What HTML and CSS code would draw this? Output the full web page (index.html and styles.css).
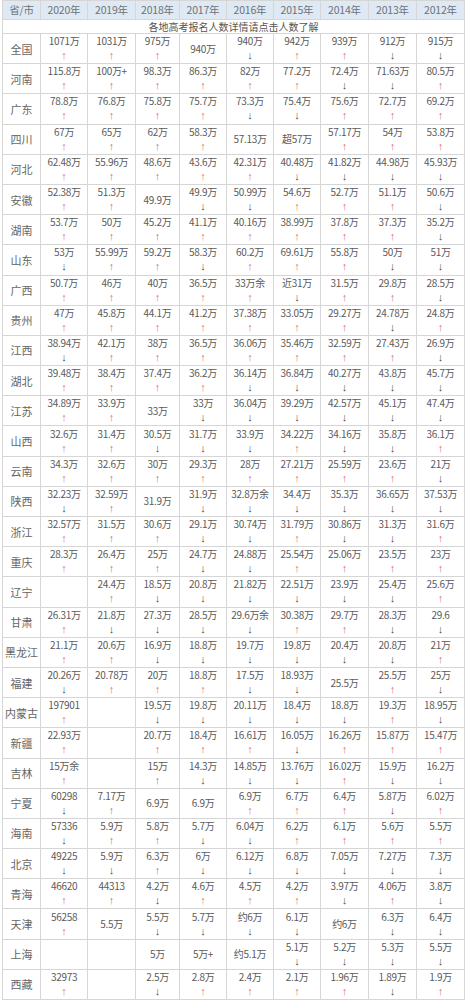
FILE: index.html
```html
<!DOCTYPE html>
<html lang="zh-CN">
<head>
<meta charset="utf-8">
<title>各地高考报名人数</title>
<link rel="stylesheet" href="styles.css">
</head>
<body>
<table class="gk">
<colgroup>
<col class="c0"><col class="c1"><col class="c2"><col class="c3"><col class="c4"><col class="c5"><col class="c6"><col class="c7"><col class="c8"><col class="c9">
</colgroup>
<thead>
<tr class="head"><th>省/市</th><th>2020年</th><th>2019年</th><th>2018年</th><th>2017年</th><th>2016年</th><th>2015年</th><th>2014年</th><th>2013年</th><th>2012年</th></tr>
<tr class="sub"><td colspan="10">各地高考报名人数详情请点击人数了解</td></tr>
</thead>
<tbody>
<tr><th>全国</th><td>1071万<i class="u">↑</i></td><td>1031万<i class="u">↑</i></td><td>975万<i class="u">↑</i></td><td>940万</td><td>940万<i class="d">↓</i></td><td>942万<i class="u">↑</i></td><td>939万<i class="u">↑</i></td><td>912万<i class="d">↓</i></td><td>915万<i class="d">↓</i></td></tr>
<tr><th>河南</th><td>115.8万<i class="u">↑</i></td><td>100万+<i class="u">↑</i></td><td>98.3万<i class="u">↑</i></td><td>86.3万<i class="u">↑</i></td><td>82万<i class="u">↑</i></td><td>77.2万<i class="u">↑</i></td><td>72.4万<i class="d">↓</i></td><td>71.63万<i class="d">↓</i></td><td>80.5万<i class="u">↑</i></td></tr>
<tr><th>广东</th><td>78.8万<i class="u">↑</i></td><td>76.8万<i class="u">↑</i></td><td>75.8万<i class="u">↑</i></td><td>75.7万<i class="u">↑</i></td><td>73.3万<i class="d">↓</i></td><td>75.4万<i class="d">↓</i></td><td>75.6万<i class="u">↑</i></td><td>72.7万<i class="u">↑</i></td><td>69.2万<i class="u">↑</i></td></tr>
<tr><th>四川</th><td>67万<i class="u">↑</i></td><td>65万<i class="u">↑</i></td><td>62万<i class="u">↑</i></td><td>58.3万<i class="u">↑</i></td><td>57.13万</td><td>超57万</td><td>57.17万<i class="u">↑</i></td><td>54万<i class="u">↑</i></td><td>53.8万<i class="u">↑</i></td></tr>
<tr><th>河北</th><td>62.48万<i class="u">↑</i></td><td>55.96万<i class="u">↑</i></td><td>48.6万<i class="u">↑</i></td><td>43.6万<i class="u">↑</i></td><td>42.31万<i class="u">↑</i></td><td>40.48万<i class="d">↓</i></td><td>41.82万<i class="d">↓</i></td><td>44.98万<i class="d">↓</i></td><td>45.93万<i class="d">↓</i></td></tr>
<tr><th>安徽</th><td>52.38万<i class="u">↑</i></td><td>51.3万<i class="u">↑</i></td><td>49.9万</td><td>49.9万<i class="d">↓</i></td><td>50.99万<i class="d">↓</i></td><td>54.6万<i class="u">↑</i></td><td>52.7万<i class="u">↑</i></td><td>51.1万<i class="u">↑</i></td><td>50.6万<i class="d">↓</i></td></tr>
<tr><th>湖南</th><td>53.7万<i class="u">↑</i></td><td>50万<i class="u">↑</i></td><td>45.2万<i class="u">↑</i></td><td>41.1万<i class="u">↑</i></td><td>40.16万<i class="u">↑</i></td><td>38.99万<i class="u">↑</i></td><td>37.8万<i class="u">↑</i></td><td>37.3万<i class="u">↑</i></td><td>35.2万<i class="d">↓</i></td></tr>
<tr><th>山东</th><td>53万<i class="d">↓</i></td><td>55.99万<i class="u">↑</i></td><td>59.2万<i class="u">↑</i></td><td>58.3万<i class="d">↓</i></td><td>60.2万<i class="u">↑</i></td><td>69.61万<i class="u">↑</i></td><td>55.8万<i class="u">↑</i></td><td>50万<i class="d">↓</i></td><td>51万<i class="d">↓</i></td></tr>
<tr><th>广西</th><td>50.7万<i class="u">↑</i></td><td>46万<i class="u">↑</i></td><td>40万<i class="u">↑</i></td><td>36.5万<i class="u">↑</i></td><td>33万余<i class="u">↑</i></td><td>近31万<i class="d">↓</i></td><td>31.5万<i class="u">↑</i></td><td>29.8万<i class="u">↑</i></td><td>28.5万<i class="d">↓</i></td></tr>
<tr><th>贵州</th><td>47万<i class="u">↑</i></td><td>45.8万<i class="u">↑</i></td><td>44.1万<i class="u">↑</i></td><td>41.2万<i class="u">↑</i></td><td>37.38万<i class="u">↑</i></td><td>33.05万<i class="u">↑</i></td><td>29.27万<i class="u">↑</i></td><td>24.78万<i class="d">↓</i></td><td>24.8万<i class="u">↑</i></td></tr>
<tr><th>江西</th><td>38.94万<i class="d">↓</i></td><td>42.1万<i class="u">↑</i></td><td>38万<i class="u">↑</i></td><td>36.5万<i class="u">↑</i></td><td>36.06万<i class="u">↑</i></td><td>35.46万<i class="u">↑</i></td><td>32.59万<i class="u">↑</i></td><td>27.43万<i class="u">↑</i></td><td>26.9万<i class="d">↓</i></td></tr>
<tr><th>湖北</th><td>39.48万<i class="u">↑</i></td><td>38.4万<i class="u">↑</i></td><td>37.4万<i class="u">↑</i></td><td>36.2万<i class="u">↑</i></td><td>36.14万<i class="d">↓</i></td><td>36.84万<i class="d">↓</i></td><td>40.27万<i class="d">↓</i></td><td>43.8万<i class="d">↓</i></td><td>45.7万<i class="d">↓</i></td></tr>
<tr><th>江苏</th><td>34.89万<i class="u">↑</i></td><td>33.9万<i class="u">↑</i></td><td>33万</td><td>33万<i class="d">↓</i></td><td>36.04万<i class="d">↓</i></td><td>39.29万<i class="d">↓</i></td><td>42.57万<i class="d">↓</i></td><td>45.1万<i class="d">↓</i></td><td>47.4万<i class="d">↓</i></td></tr>
<tr><th>山西</th><td>32.6万<i class="u">↑</i></td><td>31.4万<i class="u">↑</i></td><td>30.5万<i class="d">↓</i></td><td>31.7万<i class="d">↓</i></td><td>33.9万<i class="d">↓</i></td><td>34.22万<i class="u">↑</i></td><td>34.16万<i class="d">↓</i></td><td>35.8万<i class="d">↓</i></td><td>36.1万<i class="u">↑</i></td></tr>
<tr><th>云南</th><td>34.3万<i class="u">↑</i></td><td>32.6万<i class="u">↑</i></td><td>30万<i class="u">↑</i></td><td>29.3万<i class="u">↑</i></td><td>28万<i class="u">↑</i></td><td>27.21万<i class="u">↑</i></td><td>25.59万<i class="u">↑</i></td><td>23.6万<i class="u">↑</i></td><td>21万<i class="d">↓</i></td></tr>
<tr><th>陕西</th><td>32.23万<i class="d">↓</i></td><td>32.59万<i class="u">↑</i></td><td>31.9万</td><td>31.9万<i class="d">↓</i></td><td>32.8万余<i class="d">↓</i></td><td>34.4万<i class="d">↓</i></td><td>35.3万<i class="d">↓</i></td><td>36.65万<i class="d">↓</i></td><td>37.53万<i class="d">↓</i></td></tr>
<tr><th>浙江</th><td>32.57万<i class="u">↑</i></td><td>31.5万<i class="u">↑</i></td><td>30.6万<i class="u">↑</i></td><td>29.1万<i class="d">↓</i></td><td>30.74万<i class="d">↓</i></td><td>31.79万<i class="u">↑</i></td><td>30.86万<i class="d">↓</i></td><td>31.3万<i class="d">↓</i></td><td>31.6万<i class="u">↑</i></td></tr>
<tr><th>重庆</th><td>28.3万<i class="u">↑</i></td><td>26.4万<i class="u">↑</i></td><td>25万<i class="u">↑</i></td><td>24.7万<i class="d">↓</i></td><td>24.88万<i class="d">↓</i></td><td>25.54万<i class="u">↑</i></td><td>25.06万<i class="u">↑</i></td><td>23.5万<i class="u">↑</i></td><td>23万<i class="u">↑</i></td></tr>
<tr><th>辽宁</th><td></td><td>24.4万<i class="u">↑</i></td><td>18.5万<i class="d">↓</i></td><td>20.8万<i class="d">↓</i></td><td>21.82万<i class="d">↓</i></td><td>22.51万<i class="d">↓</i></td><td>23.9万<i class="d">↓</i></td><td>25.4万<i class="d">↓</i></td><td>25.6万<i class="u">↑</i></td></tr>
<tr><th>甘肃</th><td>26.31万<i class="u">↑</i></td><td>21.8万<i class="d">↓</i></td><td>27.3万<i class="d">↓</i></td><td>28.5万<i class="d">↓</i></td><td>29.6万余<i class="d">↓</i></td><td>30.38万<i class="u">↑</i></td><td>29.7万<i class="u">↑</i></td><td>28.3万<i class="d">↓</i></td><td>29.6<i class="d">↓</i></td></tr>
<tr><th>黑龙江</th><td>21.1万<i class="u">↑</i></td><td>20.6万<i class="u">↑</i></td><td>16.9万<i class="d">↓</i></td><td>18.8万<i class="d">↓</i></td><td>19.7万<i class="d">↓</i></td><td>19.8万<i class="d">↓</i></td><td>20.4万<i class="d">↓</i></td><td>20.8万<i class="d">↓</i></td><td>21万<i class="u">↑</i></td></tr>
<tr><th>福建</th><td>20.26万<i class="d">↓</i></td><td>20.78万<i class="u">↑</i></td><td>20万<i class="u">↑</i></td><td>18.8万<i class="u">↑</i></td><td>17.5万<i class="d">↓</i></td><td>18.93万<i class="d">↓</i></td><td>25.5万</td><td>25.5万<i class="u">↑</i></td><td>25万<i class="d">↓</i></td></tr>
<tr><th>内蒙古</th><td>197901<i class="u">↑</i></td><td></td><td>19.5万<i class="d">↓</i></td><td>19.8万<i class="d">↓</i></td><td>20.11万<i class="d">↓</i></td><td>18.4万<i class="d">↓</i></td><td>18.8万<i class="d">↓</i></td><td>19.3万<i class="u">↑</i></td><td>18.95万<i class="d">↓</i></td></tr>
<tr><th>新疆</th><td>22.93万<i class="u">↑</i></td><td></td><td>20.7万<i class="u">↑</i></td><td>18.4万<i class="u">↑</i></td><td>16.61万<i class="u">↑</i></td><td>16.05万<i class="d">↓</i></td><td>16.26万<i class="u">↑</i></td><td>15.87万<i class="u">↑</i></td><td>15.47万<i class="u">↑</i></td></tr>
<tr><th>吉林</th><td>15万余<i class="u">↑</i></td><td></td><td>15万<i class="u">↑</i></td><td>14.3万<i class="d">↓</i></td><td>14.85万<i class="d">↓</i></td><td>13.76万<i class="d">↓</i></td><td>16.02万<i class="u">↑</i></td><td>15.9万<i class="d">↓</i></td><td>16.2万<i class="d">↓</i></td></tr>
<tr><th>宁夏</th><td>60298<i class="d">↓</i></td><td>7.17万<i class="u">↑</i></td><td>6.9万</td><td>6.9万</td><td>6.9万<i class="u">↑</i></td><td>6.7万<i class="u">↑</i></td><td>6.4万<i class="u">↑</i></td><td>5.87万<i class="d">↓</i></td><td>6.02万<i class="u">↑</i></td></tr>
<tr><th>海南</th><td>57336<i class="d">↓</i></td><td>5.9万<i class="u">↑</i></td><td>5.8万<i class="u">↑</i></td><td>5.7万<i class="d">↓</i></td><td>6.04万<i class="d">↓</i></td><td>6.2万<i class="u">↑</i></td><td>6.1万<i class="u">↑</i></td><td>5.6万<i class="u">↑</i></td><td>5.5万<i class="u">↑</i></td></tr>
<tr><th>北京</th><td>49225<i class="d">↓</i></td><td>5.9万<i class="d">↓</i></td><td>6.3万<i class="u">↑</i></td><td>6万<i class="d">↓</i></td><td>6.12万<i class="d">↓</i></td><td>6.8万<i class="d">↓</i></td><td>7.05万<i class="d">↓</i></td><td>7.27万<i class="d">↓</i></td><td>7.3万<i class="d">↓</i></td></tr>
<tr><th>青海</th><td>46620<i class="u">↑</i></td><td>44313<i class="u">↑</i></td><td>4.2万<i class="d">↓</i></td><td>4.6万<i class="u">↑</i></td><td>4.5万<i class="u">↑</i></td><td>4.2万<i class="u">↑</i></td><td>3.97万<i class="d">↓</i></td><td>4.06万<i class="u">↑</i></td><td>3.8万<i class="d">↓</i></td></tr>
<tr><th>天津</th><td>56258<i class="u">↑</i></td><td>5.5万</td><td>5.5万<i class="d">↓</i></td><td>5.7万<i class="d">↓</i></td><td>约6万<i class="d">↓</i></td><td>6.1万<i class="d">↓</i></td><td>约6万</td><td>6.3万<i class="d">↓</i></td><td>6.4万<i class="d">↓</i></td></tr>
<tr><th>上海</th><td></td><td></td><td>5万</td><td>5万+</td><td>约5.1万</td><td>5.1万<i class="d">↓</i></td><td>5.2万<i class="d">↓</i></td><td>5.3万<i class="d">↓</i></td><td>5.5万<i class="d">↓</i></td></tr>
<tr><th>西藏</th><td>32973<i class="u">↑</i></td><td></td><td>2.5万<i class="d">↓</i></td><td>2.8万<i class="u">↑</i></td><td>2.4万<i class="u">↑</i></td><td>2.1万<i class="u">↑</i></td><td>1.96万<i class="u">↑</i></td><td>1.89万<i class="d">↓</i></td><td>1.9万<i class="u">↑</i></td></tr>
</tbody>
</table>
</body>
</html>
```
FILE: styles.css
```css
html, body {
  margin: 0;
  padding: 0;
  background: #ffffff;
}

body {
  font-family: "Noto Sans CJK SC", "Noto Sans", sans-serif;
  color: #585858;
  overflow: hidden;
}

.gk {
  border-collapse: collapse;
  table-layout: fixed;
  width: 462px;
  margin-left: 2px;
}

.c0 { width: 38px; }
.c1 { width: 47px; }
.c2 { width: 48px; }
.c3 { width: 44px; }
.c4 { width: 47px; }
.c5 { width: 47px; }
.c6 { width: 47px; }
.c7 { width: 48px; }
.c8 { width: 48px; }
.c9 { width: 48px; }

.gk th,
.gk td {
  border: 1px solid #d6d6d6;
  padding: 0;
  text-align: center;
  vertical-align: middle;
  white-space: nowrap;
  overflow: hidden;
  font-weight: normal;
  font-size: 10px;
  line-height: 14px;
  letter-spacing: -0.3px;
  color: #5a5a5a;
}

.gk .head th {
  height: 18px;
  background: #dfe9f3;
  color: #6c737b;
  font-size: 10.5px;
  letter-spacing: -0.2px;
}

.gk .sub td {
  height: 13px;
  line-height: 13px;
  font-size: 10px;
  letter-spacing: 0;
  color: #555;
}

.gk tbody tr {
  height: 30.2px;
}

.gk tbody th {
  font-size: 11px;
  letter-spacing: 0;
  color: #666;
}

.gk i {
  display: block;
  font-family: "Liberation Sans", "DejaVu Sans", sans-serif;
  font-style: normal;
  font-size: 11px;
  line-height: 15px;
  letter-spacing: 0;
}

.gk i.u {
  color: #d9706f;
}

.gk i.d {
  color: #505050;
}
```
